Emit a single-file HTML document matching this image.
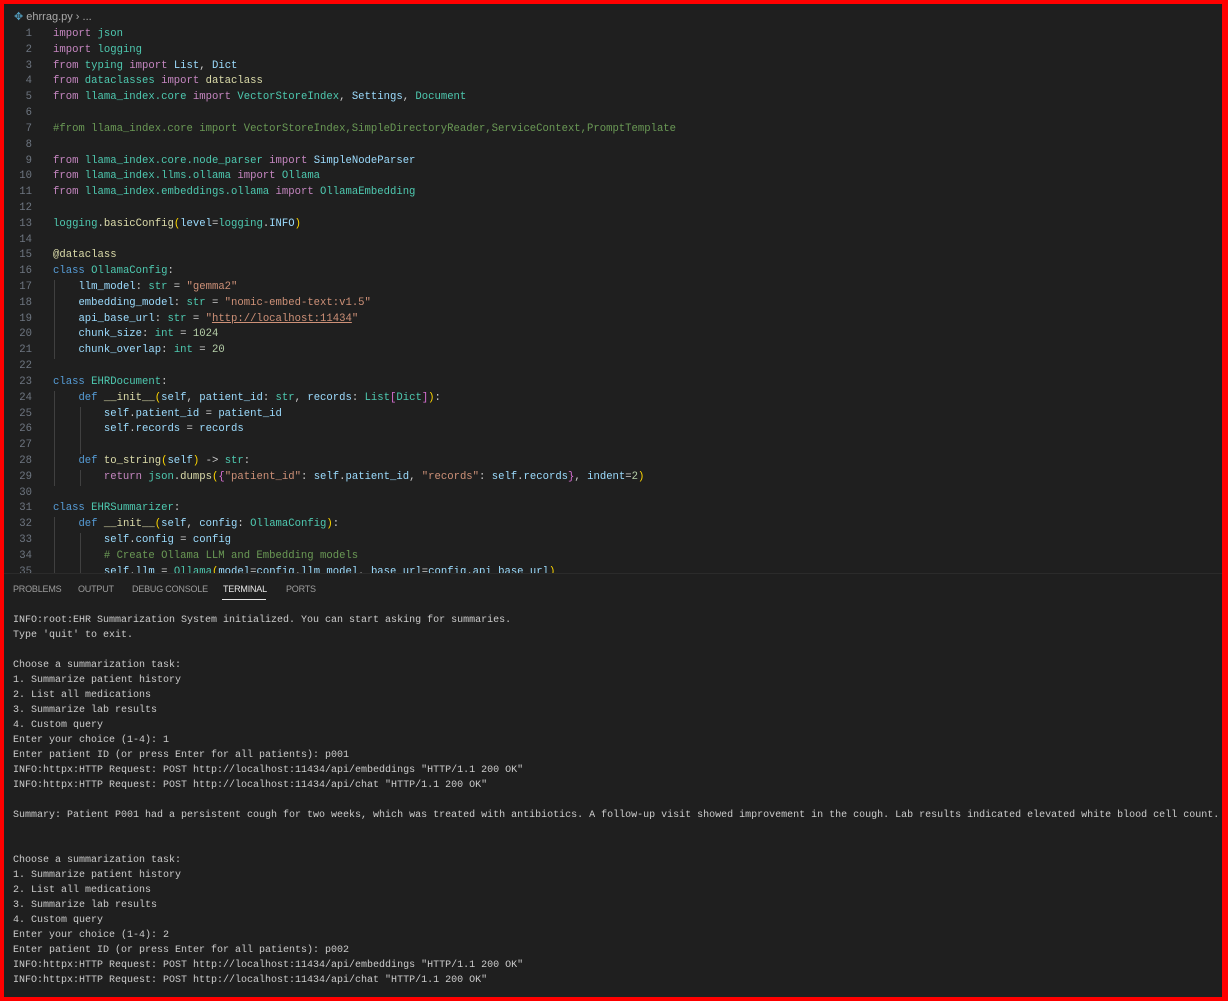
<!DOCTYPE html>
<html><head><meta charset="utf-8"><style>
html,body{margin:0;padding:0;background:#f00;}
#f{position:absolute;left:4px;top:4px;width:1218px;height:993px;background:#1f1f1f;overflow:hidden;}
.code{position:absolute;left:49px;top:23px;margin:0;font:10.6px/15.82px "Liberation Mono",monospace;color:#cccccc;white-space:pre;}
.ln{position:absolute;left:0;top:23px;width:28px;margin:0;font:10.6px/15.82px "Liberation Mono",monospace;color:#6e7681;text-align:right;white-space:pre;}
.k{color:#c586c0}.m{color:#4ec9b0}.v{color:#9cdcfe}.f{color:#dcdcaa}.s{color:#ce9178}.n{color:#b5cea8}.c{color:#6a9955}.b{color:#569cd6}.y{color:#ffd700}.p{color:#da70d6}.u{text-decoration:underline;text-decoration-color:#ce9178}
.g{position:absolute;width:1px;background:#404040;}
#bc{position:absolute;left:10px;top:6px;font:11px "Liberation Sans",sans-serif;color:#a9a9a9;}
#term{position:absolute;left:0;top:569px;width:1218px;height:424px;background:#1f1f1f;border-top:1px solid #2b2b2b;}
.tab{position:absolute;top:10px;font:9px "Liberation Sans",sans-serif;color:#9d9d9d;letter-spacing:-0.2px;}
.tt{position:absolute;left:9px;top:39px;margin:0;font:10px/15px "Liberation Mono",monospace;color:#cccccc;white-space:pre;}
</style></head><body><div id="f">
<div id="bc"><span style="color:#519aba">✥</span> ehrrag.py › ...</div>
<div class="g" style="left:50px;top:276px;height:79px"></div>
<div class="g" style="left:50px;top:387px;height:95px"></div>
<div class="g" style="left:76px;top:403px;height:47px"></div>
<div class="g" style="left:76px;top:466px;height:16px"></div>
<div class="g" style="left:50px;top:513px;height:60px"></div>
<div class="g" style="left:76px;top:529px;height:44px"></div>
<pre class="ln">1
2
3
4
5
6
7
8
9
10
11
12
13
14
15
16
17
18
19
20
21
22
23
24
25
26
27
28
29
30
31
32
33
34
35</pre>
<pre class="code"><span class="k">import</span> <span class="m">json</span>
<span class="k">import</span> <span class="m">logging</span>
<span class="k">from</span> <span class="m">typing</span> <span class="k">import</span> <span class="v">List</span>, <span class="v">Dict</span>
<span class="k">from</span> <span class="m">dataclasses</span> <span class="k">import</span> <span class="f">dataclass</span>
<span class="k">from</span> <span class="m">llama_index.core</span> <span class="k">import</span> <span class="m">VectorStoreIndex</span>, <span class="v">Settings</span>, <span class="m">Document</span>

<span class="c">#from llama_index.core import VectorStoreIndex,SimpleDirectoryReader,ServiceContext,PromptTemplate</span>

<span class="k">from</span> <span class="m">llama_index.core.node_parser</span> <span class="k">import</span> <span class="v">SimpleNodeParser</span>
<span class="k">from</span> <span class="m">llama_index.llms.ollama</span> <span class="k">import</span> <span class="m">Ollama</span>
<span class="k">from</span> <span class="m">llama_index.embeddings.ollama</span> <span class="k">import</span> <span class="m">OllamaEmbedding</span>

<span class="m">logging</span>.<span class="f">basicConfig</span><span class="y">(</span><span class="v">level</span>=<span class="m">logging</span>.<span class="v">INFO</span><span class="y">)</span>

<span class="f">@dataclass</span>
<span class="b">class</span> <span class="m">OllamaConfig</span>:
    <span class="v">llm_model</span>: <span class="m">str</span> = <span class="s">"gemma2"</span>
    <span class="v">embedding_model</span>: <span class="m">str</span> = <span class="s">"nomic-embed-text:v1.5"</span>
    <span class="v">api_base_url</span>: <span class="m">str</span> = <span class="s">"<span class="u">http://localhost:11434</span>"</span>
    <span class="v">chunk_size</span>: <span class="m">int</span> = <span class="n">1024</span>
    <span class="v">chunk_overlap</span>: <span class="m">int</span> = <span class="n">20</span>

<span class="b">class</span> <span class="m">EHRDocument</span>:
    <span class="b">def</span> <span class="f">__init__</span><span class="y">(</span><span class="v">self</span>, <span class="v">patient_id</span>: <span class="m">str</span>, <span class="v">records</span>: <span class="m">List</span><span class="p">[</span><span class="m">Dict</span><span class="p">]</span><span class="y">)</span>:
        <span class="v">self</span>.<span class="v">patient_id</span> = <span class="v">patient_id</span>
        <span class="v">self</span>.<span class="v">records</span> = <span class="v">records</span>

    <span class="b">def</span> <span class="f">to_string</span><span class="y">(</span><span class="v">self</span><span class="y">)</span> -&gt; <span class="m">str</span>:
        <span class="k">return</span> <span class="m">json</span>.<span class="f">dumps</span><span class="y">(</span><span class="p">{</span><span class="s">"patient_id"</span>: <span class="v">self</span>.<span class="v">patient_id</span>, <span class="s">"records"</span>: <span class="v">self</span>.<span class="v">records</span><span class="p">}</span>, <span class="v">indent</span>=<span class="n">2</span><span class="y">)</span>

<span class="b">class</span> <span class="m">EHRSummarizer</span>:
    <span class="b">def</span> <span class="f">__init__</span><span class="y">(</span><span class="v">self</span>, <span class="v">config</span>: <span class="m">OllamaConfig</span><span class="y">)</span>:
        <span class="v">self</span>.<span class="v">config</span> = <span class="v">config</span>
        <span class="c"># Create Ollama LLM and Embedding models</span>
        <span class="v">self</span>.<span class="v">llm</span> = <span class="m">Ollama</span><span class="y">(</span><span class="v">model</span>=<span class="v">config</span>.<span class="v">llm_model</span>, <span class="v">base_url</span>=<span class="v">config</span>.<span class="v">api_base_url</span><span class="y">)</span></pre>
<div id="term">
<span class="tab" style="left:9px">PROBLEMS</span>
<span class="tab" style="left:74px">OUTPUT</span>
<span class="tab" style="left:128px">DEBUG CONSOLE</span>
<span class="tab" style="left:219px;color:#e7e7e7">TERMINAL</span>
<div style="position:absolute;left:218px;top:25px;width:44px;height:1px;background:#e7e7e7"></div>
<span class="tab" style="left:282px">PORTS</span>
<pre class="tt">INFO:root:EHR Summarization System initialized. You can start asking for summaries.
Type 'quit' to exit.

Choose a summarization task:
1. Summarize patient history
2. List all medications
3. Summarize lab results
4. Custom query
Enter your choice (1-4): 1
Enter patient ID (or press Enter for all patients): p001
INFO:httpx:HTTP Request: POST http://localhost:11434/api/embeddings "HTTP/1.1 200 OK"
INFO:httpx:HTTP Request: POST http://localhost:11434/api/chat "HTTP/1.1 200 OK"

Summary: Patient P001 had a persistent cough for two weeks, which was treated with antibiotics. A follow-up visit showed improvement in the cough. Lab results indicated elevated white blood cell count.


Choose a summarization task:
1. Summarize patient history
2. List all medications
3. Summarize lab results
4. Custom query
Enter your choice (1-4): 2
Enter patient ID (or press Enter for all patients): p002
INFO:httpx:HTTP Request: POST http://localhost:11434/api/embeddings "HTTP/1.1 200 OK"
INFO:httpx:HTTP Request: POST http://localhost:11434/api/chat "HTTP/1.1 200 OK"</pre>
</div>
</div></body></html>
